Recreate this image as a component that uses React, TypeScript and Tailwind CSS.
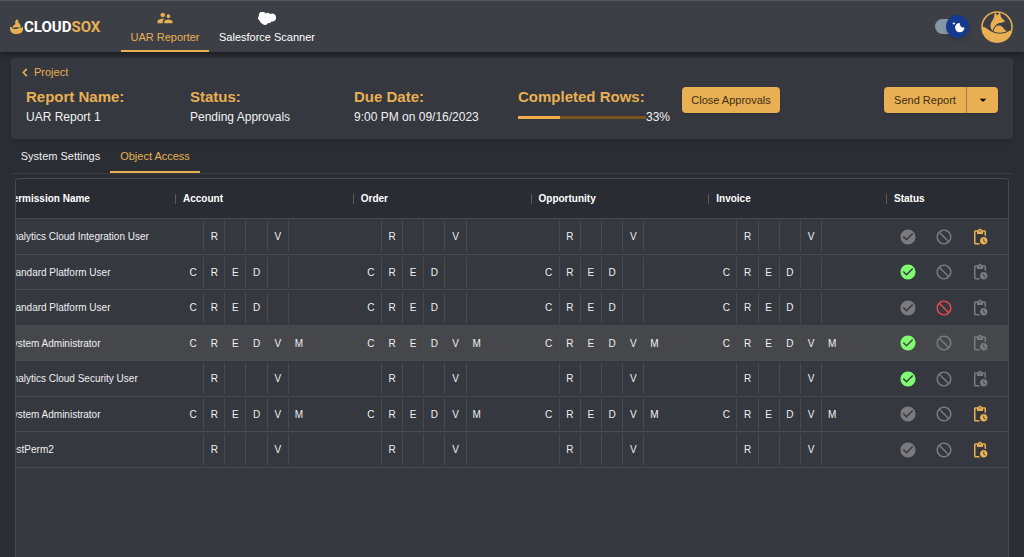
import React, { useState } from 'react';
import { MdArrowDropDown, MdBlock, MdCheckCircle, MdPendingActions } from 'react-icons/md';

type Status = 'approved' | 'rejected' | 'pending';

interface PermissionRow {
  id: number;
  name: string;
  access: string;
  status: Status;
}

const PERMISSIONS = ['C', 'R', 'E', 'D', 'V', 'M'];
const OBJECTS = ['Account', 'Order', 'Opportunity', 'Invoice'];

const rows: PermissionRow[] = [
  { id: 1, name: 'Analytics Cloud Integration User', access: 'RV', status: 'pending' },
  { id: 2, name: 'Standard Platform User', access: 'CRED', status: 'approved' },
  { id: 3, name: 'Standard Platform User', access: 'CRED', status: 'rejected' },
  { id: 4, name: 'System Administrator', access: 'CREDVM', status: 'approved' },
  { id: 5, name: 'Analytics Cloud Security User', access: 'RV', status: 'approved' },
  { id: 6, name: 'System Administrator', access: 'CREDVM', status: 'pending' },
  { id: 7, name: 'TestPerm2', access: 'RV', status: 'pending' },
];

const ShipIcon = () => (
  <svg viewBox="0 0 26 30" className="h-[15px] w-[13px]" fill="#e8b052" aria-hidden="true">
    <path d="M14 0c0 2 3 3 4 5l-3 1c5 2 7 6 6 12-5-2-10-2-16 0 0-4 3-6 6-8-2-4 0-7 3-10z" />
    <path d="M0 15c2 1 4 2 5 4 5 2 10 1 14-1 3 0 5-1 7-3 2 9-3 15-13 15S-1 24 0 15z" />
  </svg>
);

const PeopleIcon = () => (
  <svg viewBox="0 0 24 24" className="h-[18px] w-[18px]" fill="currentColor" aria-hidden="true">
    <path d="M16.5 12c1.38 0 2.49-1.12 2.49-2.5S17.88 7 16.5 7C15.12 7 14 8.12 14 9.5s1.12 2.5 2.5 2.5zM9 11c1.66 0 2.99-1.34 2.99-3S10.66 5 9 5C7.34 5 6 6.34 6 8s1.34 3 3 3zm7.5 3c-1.83 0-5.5.92-5.5 2.75V19h11v-2.25c0-1.83-3.67-2.75-5.5-2.75zM9 13c-2.33 0-7 1.17-7 3.5V19h7v-2.25c0-.85.33-2.34 2.37-3.47C10.5 13.1 9.66 13 9 13z" />
  </svg>
);

const CloudIcon = () => (
  <svg viewBox="0 0 36 26" className="h-[13px] w-[18px]" fill="#fff" aria-hidden="true">
    <path d="M15 3a7 7 0 0 1 9 1 8 8 0 0 1 12 8c0 5-4 8-9 7a6 6 0 0 1-7 3 7 7 0 0 1-12 1c-3-1-4-3-4-5a6 6 0 0 1-2-10 7 7 0 0 1 13-5z" />
  </svg>
);

const BackIcon = () => (
  <svg viewBox="0 0 6 10" className="h-[9px] w-[6px]" fill="none" stroke="currentColor" strokeWidth="1.8" aria-hidden="true">
    <path d="M5 1L1.2 5 5 9" />
  </svg>
);

const FoxAvatar = () => (
  <svg viewBox="0 0 64 64" className="h-8 w-8" aria-hidden="true">
    <circle cx="32" cy="32" r="30" fill="#3c3e44" stroke="#e8b052" strokeWidth="3" />
    <path d="M2 31c8 1 11 6 19 10 11 5 25 4 41-3 0 14-13 25-30 25S1 50 2 31z" fill="#e8b052" />
    <path d="M27 4c3 1 5 3 6 5l4-6c2 3 3 6 3 9 2 3 5 5 8 8-3 3-8 4-12 4-6 3-11 8-12 16-6-5-6-12-3-18 3-5 6-9 6-18z" fill="#e8b052" />
    <path d="M24 41c1-7 6-14 14-13 6 1 8 9 15 13-9 4-20 5-29 0z" fill="#e8b052" stroke="#3c3e44" strokeWidth="2" />
  </svg>
);

const ThemeSwitch: React.FC = () => {
  const [dark, setDark] = useState(true);

  return (
    <label className="relative flex h-6 w-9 cursor-pointer items-center pl-0.5" aria-label="Dark mode">
      <input type="checkbox" role="switch" checked={dark} onChange={() => setDark(!dark)} className="peer sr-only" />
      <span className="h-[15px] w-7 rounded-full bg-[#8796a5]" />
      <span className="absolute left-0 flex h-[23px] w-[23px] items-center justify-center rounded-full bg-[#143a8e] shadow-md peer-checked:left-[13px]">
        <svg viewBox="0 0 20 20" className="h-[14px] w-[14px]" fill="#fff" aria-hidden="true">
          <path d="M4.2 2.5l-.7 1.8-1.8.7 1.8.7.7 1.8.6-1.8L6.7 5l-1.9-.7-.6-1.8zm15 8.3a6.7 6.7 0 11-6.6-6.6 5.8 5.8 0 006.6 6.6z" />
        </svg>
      </span>
    </label>
  );
};

const Header = () => (
  <header className="relative flex h-[52px] items-center justify-between border-t border-[#53565a] bg-[#3c3f45] pl-2.5 pr-[11px] shadow-[0_2px_5px_rgba(0,0,0,0.4)]">
    <div className="flex h-full items-center">
      <a href="#home" className="flex w-[111px] items-center">
        <ShipIcon />
        <span className="pl-px font-[Roboto,sans-serif] text-[15px] leading-5 font-bold text-white">
          CLOUD<span className="text-[#e8b052]">SOX</span>
        </span>
      </a>
      <nav className="flex h-full text-[11px] leading-4">
        <a href="#uar" className="flex w-22 flex-col items-center gap-0.5 border-b-2 border-[#e8b052] pt-2 text-[#e8b052]">
          <PeopleIcon />
          <span className="whitespace-nowrap">UAR Reporter</span>
        </a>
        <a href="#scanner" className="flex w-[116px] flex-col items-center gap-0.5 pt-2 text-white">
          <span className="flex h-[18px] items-center">
            <CloudIcon />
          </span>
          <span className="whitespace-nowrap">Salesforce Scanner</span>
        </a>
      </nav>
    </div>
    <div className="flex items-center gap-3">
      <ThemeSwitch />
      <button type="button" aria-label="Profile" className="rounded-full">
        <FoxAvatar />
      </button>
    </div>
  </header>
);

const Detail: React.FC<{ label: string; children: React.ReactNode }> = ({ label, children }) => (
  <div className="w-[164px] whitespace-nowrap">
    <h2 className="text-[15px] leading-5 font-bold text-[#e8b052]">{label}</h2>
    <div className="text-xs leading-5">{children}</div>
  </div>
);

const ReportSummary = () => {
  const completed = 33;

  return (
    <section className="rounded bg-[#35383f] px-[15px] pt-1.5 pb-3 shadow-md">
      <a href="#project" className="-ml-1 flex w-fit items-center gap-1.5 text-[11px] leading-4 text-[#e8b052]">
        <BackIcon />
        Project
      </a>
      <div className="flex items-start pt-[7px]">
        <Detail label="Report Name:">UAR Report 1</Detail>
        <Detail label="Status:">Pending Approvals</Detail>
        <Detail label="Due Date:">9:00 PM on 09/16/2023</Detail>
        <Detail label="Completed Rows:">
          <div className="flex items-center">
            <div className="h-[3px] w-32 bg-[#7a541f]">
              <div className="h-full bg-[#f0ae4b]" style={{ width: `${completed}%` }} />
            </div>
            {completed}%
          </div>
        </Detail>
        <button type="button" className="h-[26px] w-[98px] rounded-sm bg-[#e8b052] text-[11px] whitespace-nowrap text-[#3a2e18] shadow">
          Close Approvals
        </button>
        <div className="ml-auto flex h-[26px] rounded-sm bg-[#e8b052] text-[11px] text-[#3a2e18] shadow">
          <button type="button" className="w-[83px] border-r border-[#a58140] whitespace-nowrap">
            Send Report
          </button>
          <button type="button" aria-label="More report actions" className="flex w-[31px] items-center justify-center text-black">
            <MdArrowDropDown size={16} />
          </button>
        </div>
      </div>
    </section>
  );
};

const AccessCell: React.FC<{ access: string }> = ({ access }) => (
  <td className="border-b border-[#494a4e] p-0 pl-[7px]">
    <div className="grid h-[31px] w-[127px] grid-cols-6">
      {PERMISSIONS.map((permission) => (
        <span
          key={permission}
          className="flex items-center justify-center border-l border-[#494a4e] first:border-transparent"
        >
          {access.includes(permission) ? permission : ''}
        </span>
      ))}
    </div>
  </td>
);

const StatusCell: React.FC<{ status: Status }> = ({ status }) => (
  <td className="border-b border-[#494a4e] p-0 pl-[13px] text-[#7b7b7d]">
    <div className="flex items-center gap-[18px]">
      <button type="button" aria-label="Approve" className={status === 'approved' ? 'text-[#80fc70]' : ''}>
        <MdCheckCircle size={18} />
      </button>
      <button type="button" aria-label="Reject" className={status === 'rejected' ? 'text-[#e5484a]' : ''}>
        <MdBlock size={18} className="-scale-x-100" />
      </button>
      <button type="button" aria-label="Mark as pending" className={status === 'pending' ? 'text-[#e8b052]' : ''}>
        <MdPendingActions size={18} />
      </button>
    </div>
  </td>
);

const HeadCell: React.FC<{ title: string }> = ({ title }) => (
  <th className="border-b border-[#494a4e] p-0 font-bold">
    <div className="border-l border-[#5a5b5e] pl-[7px] leading-[10px]">{title}</div>
  </th>
);

const AccessTable = () => (
  <div className="mx-1 mt-1 flex-1 overflow-hidden rounded-t border border-b-0 border-[#494a4e] bg-[#35383f]">
    {/* scrolled slightly to the right, so the first column is cut */}
    <table className="-ml-5 w-[calc(100%+20px)] table-fixed border-separate border-spacing-0 text-left text-[10px]">
      <colgroup>
        <col className="w-[179px]" />
        {OBJECTS.map((object) => (
          <col key={object} />
        ))}
        <col className="w-[122px]" />
      </colgroup>
      <thead className="h-10 bg-[#2a2c34] text-white">
        <tr>
          <th className="border-b border-[#494a4e] p-0 pl-2.5 font-bold">Permission Name</th>
          {OBJECTS.map((object) => (
            <HeadCell key={object} title={object} />
          ))}
          <HeadCell title="Status" />
        </tr>
      </thead>
      <tbody>
        {rows.map((row) => (
          <tr key={row.id} className={`odd:h-9 even:h-[35px] ${row.id === 4 ? 'bg-[#46474b]' : ''}`}>
            <td className="border-b border-[#494a4e] p-0 pl-2.5 whitespace-nowrap">{row.name}</td>
            {OBJECTS.map((object) => (
              <AccessCell key={object} access={row.access} />
            ))}
            <StatusCell status={row.status} />
          </tr>
        ))}
      </tbody>
    </table>
  </div>
);

const App: React.FC = () => {
  return (
    <div className="flex min-h-screen flex-col bg-[#2a2d34] font-['Liberation_Sans',Arial,sans-serif] text-[#f0f0f1]">
      <Header />
      <main className="flex flex-1 flex-col px-[11px] pt-1.5">
        <ReportSummary />
        <nav className="flex h-[35px] border-b border-[#373a41] text-[11px]">
          <a href="#settings" className="flex w-[99px] items-center justify-center border-b-2 border-transparent pt-[3px]">
            System Settings
          </a>
          <a href="#access" className="flex w-[90px] items-center justify-center border-b-2 border-[#e8b052] pt-[3px] text-[#e8b052]">
            Object Access
          </a>
        </nav>
        <AccessTable />
      </main>
    </div>
  );
};

export default App;
